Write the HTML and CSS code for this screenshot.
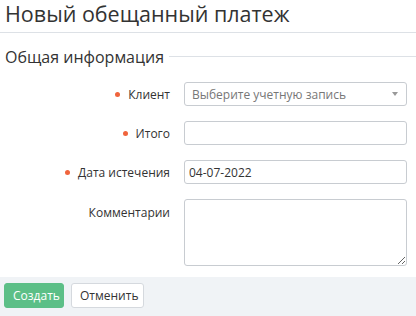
FILE: index.html
```html
<!DOCTYPE html>
<html lang="ru">
<head>
    <meta charset="UTF-8">
    <title>Новый обещанный платеж</title>
    <link rel="stylesheet" href="styles.css">
</head>
<body>
    <h1 class="page-title">Новый обещанный платеж</h1>

    <div class="section-title">
        <span>Общая информация</span>
        <div class="section-line"></div>
    </div>

    <div class="form">
        <div class="form-row">
            <label class="form-label required">Клиент</label>
            <div class="select-box">
                <span class="placeholder">Выберите учетную запись</span>
                <span class="select-arrow"></span>
            </div>
        </div>
        <div class="form-row">
            <label class="form-label required">Итого</label>
            <input class="text-input" type="text">
        </div>
        <div class="form-row">
            <label class="form-label required">Дата истечения</label>
            <input class="text-input" type="text" value="04-07-2022">
        </div>
        <div class="form-row top">
            <label class="form-label">Комментарии</label>
            <textarea class="text-area"></textarea>
        </div>
    </div>

    <div class="footer">
        <button class="btn btn-primary">Создать</button>
        <button class="btn btn-default">Отменить</button>
    </div>
</body>
</html>
```

FILE: styles.css
```css
* {
    margin: 0;
    padding: 0;
    box-sizing: border-box;
    font-family: 'Open Sans', 'Liberation Sans', sans-serif;
}

body {
    background: #fff;
    color: #333;
    width: 416px;
    height: 316px;
    overflow: hidden;
}

.page-title {
    font-size: 21.5px;
    font-weight: normal;
    color: #333;
    padding: 0 5px;
    height: 33px;
    line-height: 28px;
    border-bottom: 1px solid #dde1e6;
}

.section-title {
    display: flex;
    align-items: center;
    padding: 12px 0 0 5px;
    font-size: 16px;
    color: #333;
    height: 35px;
}

.section-line {
    flex: 1;
    height: 1px;
    background: #dde1e6;
    margin-left: 5px;
}

.form {
    padding-top: 14px;
    height: 209px;
}

.form-row {
    display: flex;
    align-items: center;
    margin-bottom: 15px;
}

.form-row.top {
    align-items: flex-start;
}

.form-label {
    width: 170px;
    text-align: right;
    font-size: 12px;
    color: #333;
    margin-right: 14px;
}

.form-row.top .form-label {
    padding-top: 5px;
}

.required::before {
    content: "";
    display: inline-block;
    width: 5px;
    height: 5px;
    border-radius: 50%;
    background: #f0643c;
    margin-right: 8px;
    vertical-align: 2px;
}

.select-box, .text-input, .text-area {
    width: 223px;
    border: 1px solid #c8ccd1;
    border-radius: 3px;
    background: #fff;
    font-size: 12px;
    color: #333;
}

.select-box {
    height: 24px;
    display: flex;
    align-items: center;
    justify-content: space-between;
    padding: 0 8px 0 7px;
}

.placeholder {
    color: #777;
}

.select-arrow {
    width: 0;
    height: 0;
    border-left: 3px solid transparent;
    border-right: 3px solid transparent;
    border-top: 4px solid #999;
}

.text-input {
    height: 24px;
    padding: 0 4px;
    outline: none;
}

.text-area {
    height: 67px;
    resize: vertical;
    outline: none;
}

.footer {
    background: #f0f3f6;
    height: 39px;
    padding: 6px 4px;
    display: flex;
    gap: 7px;
}

.btn {
    height: 25px;
    font-size: 12px;
    border-radius: 3px;
    padding: 0 8px;
    cursor: pointer;
}

.btn-primary {
    background: #5cbf87;
    border: 1px solid #5cbf87;
    color: #fff;
    width: 60px;
}

.btn-default {
    background: #fff;
    border: 1px solid #d5d9de;
    color: #333;
    width: 73px;
}
```
